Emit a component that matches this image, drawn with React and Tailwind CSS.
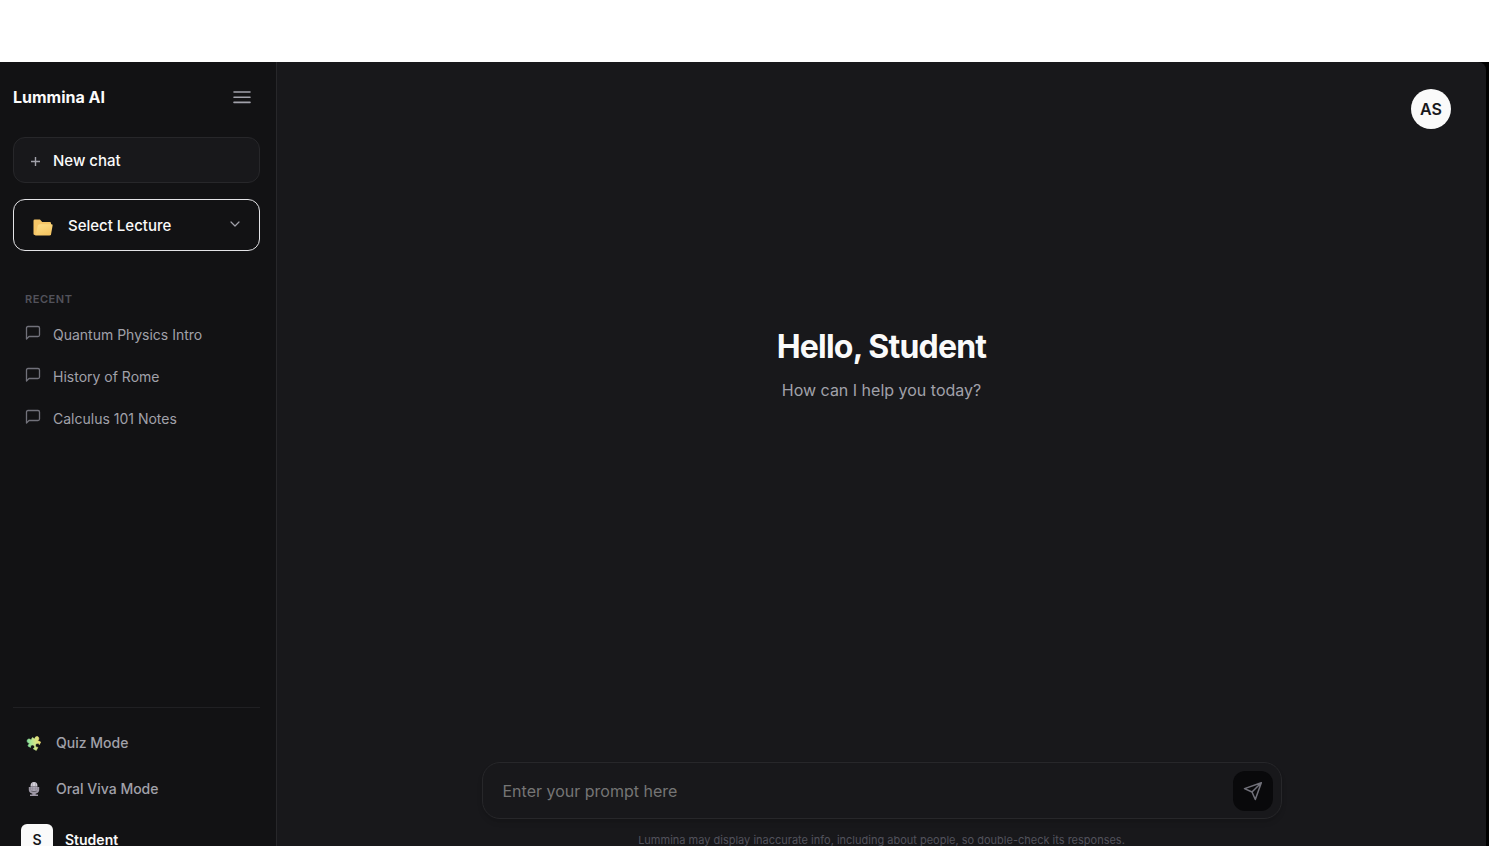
import { ChevronDown } from "lucide-react";

const RECENT_CHATS = ["Quantum Physics Intro", "History of Rome", "Calculus 101 Notes"];

function FolderIcon() {
  return (
    <svg width="20" height="17" viewBox="0 0 20 17" aria-hidden="true">
      <defs>
        <linearGradient id="folder-front" x1="0" y1="0" x2="0.6" y2="1">
          <stop offset="0" stopColor="#ffe08a" />
          <stop offset="1" stopColor="#f5c563" />
        </linearGradient>
      </defs>
      <path d="M0.5 1.8Q0.5 0.5 1.8 0.5H7l2.2 2.4h7.6q1.2 0 1.2 1.2V16H1.8Q0.5 16 0.5 14.8Z" fill="#f6c667" />
      <path d="M4.7 7.1Q5 5.2 7 5.2h11.6q1.2 0 1 1.2l-1.5 8.5Q17.8 16.5 16.3 16.5H1.8Q2.8 16 3 15Z" fill="url(#folder-front)" />
    </svg>
  );
}

function PuzzleIcon() {
  return (
    <svg width="16" height="16" viewBox="0 0 16 16" aria-hidden="true">
      <defs>
        <linearGradient id="puzzle" gradientUnits="userSpaceOnUse" x1="14" y1="4" x2="3" y2="12">
          <stop offset="0" stopColor="#f3dc70" />
          <stop offset="0.5" stopColor="#cbe68b" />
          <stop offset="1" stopColor="#86e29c" />
        </linearGradient>
      </defs>
      <path
        d="M4 4H7a2 2 0 1 1 3 0H13.5V7a2 2 0 1 0 0 3V13.5H10a2 2 0 1 0 -3 0H4V10a2 2 0 1 1 0 -3Z"
        transform="rotate(28 8 8)"
        fill="url(#puzzle)"
        stroke="url(#puzzle)"
        strokeWidth="0.5"
        strokeLinejoin="round"
      />
    </svg>
  );
}

function MicIcon() {
  return (
    <svg width="16" height="16" viewBox="0 0 16 16" aria-hidden="true">
      <path d="M2.8 6h2v2.8Q5.2 11 8 11t3.2-2.2V6h2v3.2Q12.8 12 9.4 12.7V13.4H12V15H4V13.4H6.6V12.7Q3.2 12 2.8 9.2Z" fill="#9d97a5" />
      <path d="M4.6 4.5Q4.6 1 8 1t3.4 3.5V5.4H4.6Z" fill="#d3d0d8" />
      <path d="M4.6 5.4h6.8v2.8Q11.2 10.6 8 10.6T4.6 8.2Z" fill="#aaa5b2" />
      <path d="M6.4 1.8v8.4M9.6 1.8v8.4M4.6 7.8h6.8" stroke="#8d8795" strokeWidth="0.5" />
      <path d="M6.6 11h2.8v3H6.6Z" fill="#9d97a5" />
    </svg>
  );
}

function ChatIcon() {
  return (
    <svg width="16" height="16" viewBox="0 0 16 16" fill="none" stroke="currentColor" strokeWidth="1.3" strokeLinecap="round" strokeLinejoin="round" aria-hidden="true" className="mb-1 text-[#71717a]">
      <path d="M1.5 14V3Q1.5 1.5 3 1.5H13Q14.5 1.5 14.5 3V10Q14.5 11.5 13 11.5H4Z" />
    </svg>
  );
}

function ModeButton({ icon, label }) {
  return (
    <button type="button" className="flex h-[46px] w-full items-center gap-3.5 px-[13px] text-left text-sm font-medium text-[#a1a1aa]">
      {icon}
      {label}
    </button>
  );
}

function Sidebar() {
  return (
    <aside className="flex w-[277px] shrink-0 flex-col border-r border-[#27272a] bg-[#121214] pr-4 pb-4 pl-[13px]">
      <div className="mb-[5px] flex h-[70px] shrink-0 items-center justify-between pr-2">
        <h1 className="text-base font-bold text-[#fafafa]">Lummina AI</h1>
        <button type="button" aria-label="Toggle sidebar" className="text-[#a1a1aa]">
          <svg width="20" height="20" viewBox="0 0 20 20" fill="none" stroke="currentColor" strokeWidth="1.6" strokeLinecap="round" aria-hidden="true">
            <path d="M2 5h16M2 10.2h16M2 15.4h16" />
          </svg>
        </button>
      </div>

      <button type="button" className="flex h-[46px] shrink-0 items-center gap-3 rounded-xl border border-[#27272a] bg-[#18181b] px-4 pt-0.5 text-[15px] font-medium text-[#fafafa]">
        <svg width="11" height="11" viewBox="0 0 11 11" stroke="#a1a1aa" strokeWidth="1.4" aria-hidden="true">
          <path d="M5.5 1v9M1 5.5h9" />
        </svg>
        New chat
      </button>

      <div className="relative mt-4 h-[52px] shrink-0 rounded-xl border border-[#e4e4e7]">
        <select aria-label="Lecture" className="h-full w-full appearance-none rounded-xl bg-transparent pt-0.5 pr-10 pl-[54px] text-[15px] font-medium text-[#fafafa]">
          <option>Select Lecture</option>
        </select>
        <span className="pointer-events-none absolute top-[19px] left-[19px]">
          <FolderIcon />
        </span>
        <ChevronDown size={16} strokeWidth={1.8} className="pointer-events-none absolute top-4 right-4 text-[#a1a1aa]" />
      </div>

      <nav className="mt-10 flex-1" aria-label="Recent chats">
        <h2 className="mb-[7px] px-3 text-[11px] leading-4 font-semibold tracking-wider text-[#52525b]">RECENT</h2>
        <ul>
          {RECENT_CHATS.map((chat) => (
            <li key={chat}>
              <a href="#" className="flex h-[42px] items-center gap-3 px-3 text-sm text-[#a1a1aa]">
                <ChatIcon />
                {chat}
              </a>
            </li>
          ))}
        </ul>
      </nav>

      <div className="shrink-0 border-t border-[#202023] pt-3">
        <ModeButton icon={<PuzzleIcon />} label="Quiz Mode" />
        <ModeButton icon={<MicIcon />} label="Oral Viva Mode" />
        <div className="mt-3 flex items-center gap-3 px-2">
          <span className="flex size-8 items-center justify-center rounded-md bg-[#fafafa] text-sm font-semibold text-[#18181b]">S</span>
          <span className="text-sm font-semibold text-[#fafafa]">Student</span>
        </div>
      </div>
    </aside>
  );
}

function PromptForm() {
  return (
    <form
      onSubmit={(e) => e.preventDefault()}
      className="flex h-[57px] w-full max-w-[800px] items-center rounded-[18px] border border-[#27272a] bg-[#18181b] pr-2 pl-5 shadow-md"
    >
      <input
        type="text"
        aria-label="Prompt"
        placeholder="Enter your prompt here"
        className="min-w-0 flex-1 bg-transparent text-base text-[#fafafa] outline-none placeholder:text-[#757575]"
      />
      <button type="submit" aria-label="Send" className="flex size-10 items-center justify-center rounded-xl bg-[#09090b] text-[#71717a]">
        <svg width="20" height="20" viewBox="0 0 20 20" fill="none" stroke="currentColor" strokeWidth="1.5" strokeLinejoin="round" strokeLinecap="round" aria-hidden="true">
          <path d="M18.3 1.7L1.5 7.6L9 11L12.3 18.5ZM18.3 1.7L9 11" />
        </svg>
      </button>
    </form>
  );
}

export default function App() {
  return (
    <div className="h-screen overflow-hidden bg-white font-[Inter,sans-serif]">
      <div className="mt-[62px] flex h-[calc(100vh-36px)] bg-black pr-[3px]">
        <Sidebar />
        <main className="flex min-w-0 flex-1 flex-col rounded-tr-lg bg-[#18181b] pb-6">
          <header className="flex justify-end pt-[27px] pr-[35px]">
            <button type="button" aria-label="Account" className="size-10 rounded-full bg-[#fafafa] text-base font-semibold text-[#18181b]">
              AS
            </button>
          </header>
          <section className="flex flex-1 flex-col items-center justify-center pb-[162px] text-center">
            <h2 className="text-[32px] leading-10 font-bold tracking-tight text-[#fafafa]">Hello, Student</h2>
            <p className="mt-[11px] text-base text-[#a1a1aa]">How can I help you today?</p>
          </section>
          <footer className="flex flex-col items-center px-6">
            <PromptForm />
            <p className="mt-[13px] text-[11px] leading-4 text-[#52525b]">
              Lummina may display inaccurate info, including about people, so double-check its responses.
            </p>
          </footer>
        </main>
      </div>
    </div>
  );
}
